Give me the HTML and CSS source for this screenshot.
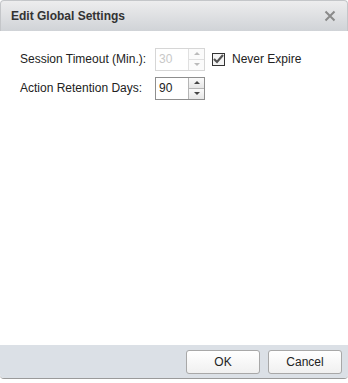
FILE: index.html
```html
<!DOCTYPE html>
<html lang="en">
<head>
    <meta charset="UTF-8">
    <title>Edit Global Settings</title>
    <link rel="stylesheet" href="styles.css">
</head>
<body>
    <div class="dialog">
        <div class="dialog-header">
            <span class="dialog-title">Edit Global Settings</span>
            <svg class="close-icon" width="12" height="12" viewBox="0 0 12 12">
                <path d="M1.5 1.5 L10.5 10.5 M10.5 1.5 L1.5 10.5" stroke="#8a8a8a" stroke-width="2"/>
            </svg>
        </div>
        <div class="dialog-body">
            <div class="form-row">
                <label class="field-label">Session Timeout (Min.):</label>
                <div class="spinner disabled">
                    <span class="spinner-value">30</span>
                    <div class="spinner-buttons">
                        <span class="spin-btn up"></span>
                        <span class="spin-btn down"></span>
                    </div>
                </div>
                <span class="checkbox">
                    <svg width="11" height="10" viewBox="0 0 11 10">
                        <path d="M1 5 L4 8 L10 1" fill="none" stroke="#555" stroke-width="2.2"/>
                    </svg>
                </span>
                <span class="check-label">Never Expire</span>
            </div>
            <div class="form-row">
                <label class="field-label">Action Retention Days:</label>
                <div class="spinner">
                    <span class="spinner-value">90</span>
                    <div class="spinner-buttons">
                        <span class="spin-btn up"></span>
                        <span class="spin-btn down"></span>
                    </div>
                </div>
            </div>
        </div>
        <div class="dialog-footer">
            <button class="btn">OK</button>
            <button class="btn">Cancel</button>
        </div>
    </div>
</body>
</html>
```

FILE: styles.css
```css
body {
    margin: 0;
    padding: 0;
    background-color: white;
    font-family: "Liberation Sans", Arial, sans-serif;
    font-size: 12px;
    color: #222;
}

.dialog {
    width: 348px;
    height: 379px;
    display: flex;
    flex-direction: column;
    box-sizing: border-box;
    border-bottom: 1px solid #9a9a9a;
    border-radius: 4px;
    background-color: white;
}

.dialog-header {
    height: 31px;
    box-sizing: border-box;
    display: flex;
    align-items: center;
    justify-content: space-between;
    padding: 0 11px 0 10px;
    background: linear-gradient(#ededee, #d0d3d7);
    border: 1px solid #c4c6c9;
    border-bottom: none;
    border-radius: 4px 4px 0 0;
}

.dialog-title {
    font-weight: bold;
    font-size: 12px;
    color: #333;
}

.close-icon {
    display: block;
}

.dialog-body {
    flex: 1;
    padding: 17px 0 0 20px;
    display: flex;
    flex-direction: column;
    gap: 7px;
}

.form-row {
    display: flex;
    align-items: center;
    height: 22px;
}

.field-label {
    width: 135px;
}

.spinner {
    width: 50px;
    height: 23px;
    box-sizing: border-box;
    border: 1px solid #8e8e8e;
    display: flex;
    background-color: white;
}

.spinner-value {
    flex: 1;
    padding-left: 3px;
    line-height: 21px;
    font-size: 12px;
}

.spinner-buttons {
    width: 15px;
    display: flex;
    flex-direction: column;
    border-left: 1px solid #b5b5b5;
}

.spin-btn {
    flex: 1;
    display: flex;
    align-items: center;
    justify-content: center;
    background: linear-gradient(#fafafa, #e6e6e6);
}

.spin-btn.down {
    border-top: 1px solid #b5b5b5;
}

.spin-btn::after {
    content: '';
    width: 0;
    height: 0;
    border-left: 3px solid transparent;
    border-right: 3px solid transparent;
}

.spin-btn.up::after {
    border-bottom: 3px solid #444;
}

.spin-btn.down::after {
    border-top: 3px solid #444;
}

.spinner.disabled {
    border-color: #d6d6d6;
    color: #c8c8c8;
}

.spinner.disabled .spinner-buttons,
.spinner.disabled .spin-btn.down {
    border-color: #e0e0e0;
}

.spinner.disabled .spin-btn {
    background: #fbfbfb;
}

.spinner.disabled .spin-btn.up::after {
    border-bottom-color: #bbb;
}

.spinner.disabled .spin-btn.down::after {
    border-top-color: #bbb;
}

.checkbox {
    width: 13px;
    height: 13px;
    box-sizing: border-box;
    border: 1px solid #333;
    margin-left: 7px;
    display: flex;
    align-items: center;
    justify-content: center;
    background-color: #f4f4f4;
}

.checkbox svg {
    display: block;
}

.check-label {
    margin-left: 7px;
    font-size: 12px;
}

.dialog-footer {
    height: 33px;
    box-sizing: border-box;
    display: flex;
    justify-content: flex-end;
    align-items: center;
    gap: 8px;
    padding: 0 6px 0 0;
    background-color: #dbe0e6;
    border-radius: 0 0 4px 4px;
}

.btn {
    width: 74px;
    height: 24px;
    font-family: "Liberation Sans", Arial, sans-serif;
    font-size: 12px;
    color: #222;
    background: linear-gradient(#ffffff, #f0f0f0);
    border: 1px solid #a8a8a8;
    border-radius: 3px;
    padding: 0;
}
```
